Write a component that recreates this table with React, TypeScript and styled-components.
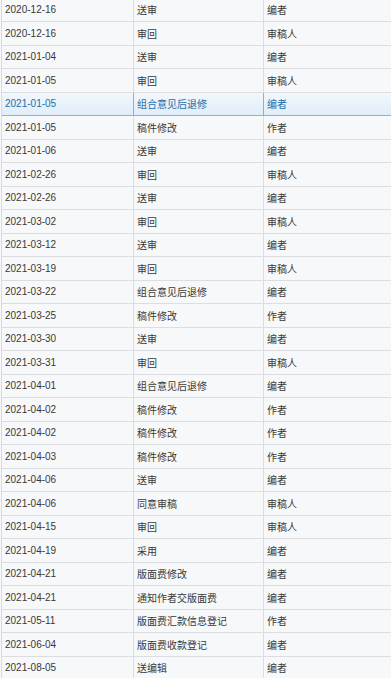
import React from "react";
import styled, { createGlobalStyle } from "styled-components";

const GlobalStyle = createGlobalStyle`
  html, body {
    margin: 0;
    padding: 0;
    background: #f7f8fa;
    overflow: hidden;
  }
`;

const Table = styled.div`
  margin: -1.5px 0 0 1px;
  border-left: 1px solid #d9dadd;
  font-family: "Liberation Sans", "Noto Sans CJK SC", sans-serif;
  font-size: 10px;
  color: #333;
`;

const Row = styled.div<{ $active?: boolean }>`
  display: grid;
  grid-template-columns: 132px 130px 1fr;
  height: 23.5px;
  box-sizing: border-box;
  border-bottom: 1px solid ${(p) => (p.$active ? "#7fb5df" : "#dcdde0")};
  background: ${(p) =>
    p.$active ? "linear-gradient(#f1f7fd, #e1edf8)" : "transparent"};
  color: ${(p) => (p.$active ? "#1d6fa9" : "#383838")};
`;

const Cell = styled.div<{ $active?: boolean; $last?: boolean }>`
  display: flex;
  align-items: center;
  padding-left: 3px;
  white-space: nowrap;
  overflow: hidden;
  border-right: ${(p) =>
    p.$last ? "none" : `1px solid ${p.$active ? "#7fb5df" : "#dcdde0"}`};
`;

const rows: [string, string, string][] = [
  ["2020-12-16", "送审", "编者"],
  ["2020-12-16", "审回", "审稿人"],
  ["2021-01-04", "送审", "编者"],
  ["2021-01-05", "审回", "审稿人"],
  ["2021-01-05", "组合意见后退修", "编者"],
  ["2021-01-05", "稿件修改", "作者"],
  ["2021-01-06", "送审", "编者"],
  ["2021-02-26", "审回", "审稿人"],
  ["2021-02-26", "送审", "编者"],
  ["2021-03-02", "审回", "审稿人"],
  ["2021-03-12", "送审", "编者"],
  ["2021-03-19", "审回", "审稿人"],
  ["2021-03-22", "组合意见后退修", "编者"],
  ["2021-03-25", "稿件修改", "作者"],
  ["2021-03-30", "送审", "编者"],
  ["2021-03-31", "审回", "审稿人"],
  ["2021-04-01", "组合意见后退修", "编者"],
  ["2021-04-02", "稿件修改", "作者"],
  ["2021-04-02", "稿件修改", "作者"],
  ["2021-04-03", "稿件修改", "作者"],
  ["2021-04-06", "送审", "编者"],
  ["2021-04-06", "同意审稿", "审稿人"],
  ["2021-04-15", "审回", "审稿人"],
  ["2021-04-19", "采用", "编者"],
  ["2021-04-21", "版面费修改", "编者"],
  ["2021-04-21", "通知作者交版面费", "编者"],
  ["2021-05-11", "版面费汇款信息登记", "作者"],
  ["2021-06-04", "版面费收款登记", "编者"],
  ["2021-08-05", "送编辑", "编者"],
];

const ACTIVE = 4;

export default function App() {
  return (
    <>
      <GlobalStyle />
      <Table>
        {rows.map(([date, action, role], i) => {
          const active = i === ACTIVE;
          return (
            <Row key={i} $active={active}>
              <Cell $active={active}>{date}</Cell>
              <Cell $active={active}>{action}</Cell>
              <Cell $active={active} $last>
                {role}
              </Cell>
            </Row>
          );
        })}
      </Table>
    </>
  );
}
